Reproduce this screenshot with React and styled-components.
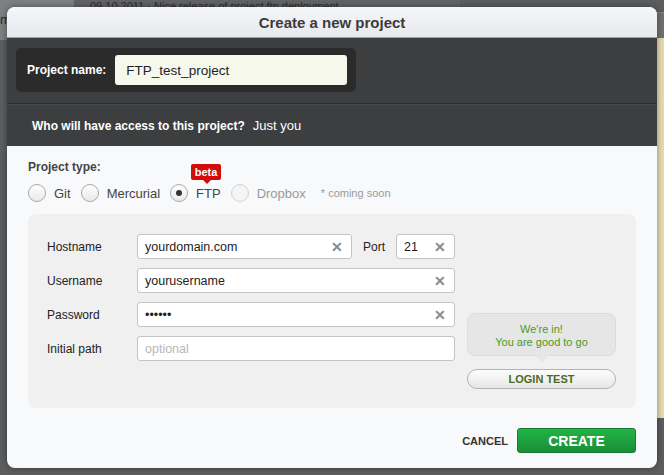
import React from 'react';
import styled, { createGlobalStyle } from 'styled-components';

// CSS
const Global = createGlobalStyle`
html, body {
  margin: 0;
  padding: 0;
  background: #5b5d5e;
  font-family: "Liberation Sans", Arial, sans-serif;
  overflow: hidden;
}
`

const Backdrop = styled.div`
position: relative;
width: 664px;
height: 475px;
background: #5b5d5e;
overflow: hidden;
`

const BackTop = styled.div`
display: flex;
height: 40px;
`

const BackLeft = styled.div`
width: 74px;
background: #7d7f80;
color: #2a2a2a;
font-size: 13px;
padding-top: 12px;
box-sizing: border-box;
`

const BackMid = styled.div`
width: 386px;
background: #616364;
color: #2e2e2e;
font-size: 11px;
padding: 0 0 0 16px;
box-sizing: border-box;
`

const BackRight = styled.div`
flex: 1;
background: #6e7071;
border-top: 1px dashed #858789;
margin-top: 12px;
`

const Beige = styled.div`
position: absolute;
right: 0;
top: 38px;
width: 7px;
height: 380px;
background: #e6dab0;
`

const Modal = styled.div`
position: absolute;
top: 7px;
left: 7px;
width: 650px;
height: 461px;
border-radius: 8px;
background: #f8f9fb;
overflow: hidden;
box-shadow: 0 0 6px rgba(0, 0, 0, 0.4);
display: flex;
flex-direction: column;
`

const Header = styled.div`
height: 31px;
flex-shrink: 0;
background: linear-gradient(#f5f6f9, #e8e9ed);
border-bottom: 1px solid #9d9ea1;
box-sizing: border-box;
display: flex;
align-items: center;
justify-content: center;
font-size: 15px;
font-weight: bold;
color: #3b3b3b;
`

const Dark = styled.div`
background: #3d3e40;
flex-shrink: 0;
`

const NameRow = styled.div`
padding: 10px 0 11px 9px;
border-bottom: 1px solid #2b2c2d;
`

const NameBox = styled.div`
display: flex;
align-items: center;
width: 340px;
height: 44px;
box-sizing: border-box;
background: #2b2b2c;
border-radius: 5px;
padding: 0 9px 0 11px;
gap: 9px;
`

const NameLabel = styled.span`
color: #fff;
font-size: 12px;
font-weight: bold;
white-space: nowrap;
`

const NameInput = styled.div`
flex: 1;
height: 30px;
background: #f6f8ec;
border-radius: 3px;
display: flex;
align-items: center;
padding-left: 11px;
font-size: 13.5px;
color: #222;
`

const AccessRow = styled.div`
height: 41px;
border-top: 1px solid #48494b;
display: flex;
align-items: center;
padding-left: 25px;
gap: 8px;
color: #fff;
`

const AccessLabel = styled.span`
font-size: 12px;
font-weight: bold;
`

const AccessValue = styled.span`
font-size: 13px;
`

const Body = styled.div`
flex: 1;
padding: 14px 21px 0 21px;
display: flex;
flex-direction: column;
`

const TypeLabel = styled.div`
font-size: 12px;
font-weight: bold;
color: #444;
`

const Radios = styled.div`
display: flex;
align-items: center;
margin-top: 9px;
height: 20px;
`

const RadioItem = styled.label`
position: relative;
display: flex;
align-items: center;
gap: 8px;
margin-right: 10px;
font-size: 13px;
color: ${p => p.disabled ? '#9a9a9a' : '#444'};
`

const Circle = styled.span`
width: 18px;
height: 18px;
box-sizing: border-box;
border-radius: 50%;
border: 1px solid ${p => p.disabled ? '#d2d2d2' : '#a9a9a9'};
background: ${p => p.disabled ? '#f4f4f4' : 'linear-gradient(#fff, #e9e9e9)'};
display: flex;
align-items: center;
justify-content: center;
&::after {
  content: '';
  display: ${p => p.checked ? 'block' : 'none'};
  width: 6px;
  height: 6px;
  border-radius: 50%;
  background: #333;
}
`

const Soon = styled.span`
font-size: 11px;
color: #999;
margin-left: 5px;
`

const Beta = styled.span`
position: absolute;
left: 21px;
top: -20px;
width: 30px;
height: 16px;
background: #d40b0b;
border-radius: 2px;
color: #fff;
font-size: 11px;
font-weight: bold;
display: flex;
align-items: center;
justify-content: center;
&::after {
  content: '';
  position: absolute;
  bottom: -4px;
  left: 12px;
  border-left: 4px solid transparent;
  border-right: 4px solid transparent;
  border-top: 4px solid #d40b0b;
}
`

const Panel = styled.div`
margin-top: 11px;
height: 194px;
box-sizing: border-box;
background: #f0f0f0;
border-radius: 8px;
padding: 20px 20px 19px 19px;
display: flex;
gap: 12px;
`

const Fields = styled.div`
display: flex;
flex-direction: column;
gap: 9px;
`

const FieldRow = styled.div`
display: flex;
align-items: center;
`

const FieldLabel = styled.span`
width: ${p => p.w || 90}px;
flex-shrink: 0;
font-size: 12px;
color: #222;
margin-left: ${p => p.ml || 0}px;
`

const Input = styled.div`
width: ${p => p.w}px;
height: 25px;
box-sizing: border-box;
background: #fff;
border: 1px solid #c4c4c4;
border-radius: 3px;
display: flex;
align-items: center;
padding: 0 8px 0 7px;
font-size: 12.5px;
color: ${p => p.placeholder ? '#b8b8b8' : '#222'};
`

const InputText = styled.span`
flex: 1;
`

const Clear = styled.span`
color: #8a8a8a;
font-size: 14px;
font-weight: bold;
line-height: 1;
`

const Side = styled.div`
align-self: flex-end;
display: flex;
flex-direction: column;
width: 149px;
gap: 13px;
`

const Bubble = styled.div`
position: relative;
height: 43px;
box-sizing: border-box;
background: #e6e6e6;
border: 1px solid #dcdcdc;
border-radius: 8px;
display: flex;
flex-direction: column;
align-items: center;
justify-content: center;
color: #4a9a1c;
font-size: 11px;
line-height: 13px;
padding-top: 2px;
&::after {
  content: '';
  position: absolute;
  bottom: -7px;
  left: 67px;
  border-left: 7px solid transparent;
  border-right: 7px solid transparent;
  border-top: 7px solid #e6e6e6;
}
`

const LoginButton = styled.div`
height: 20px;
box-sizing: border-box;
border: 1px solid #b2b2b2;
border-radius: 10px;
background: linear-gradient(#fdfdfd, #e6e6e6);
display: flex;
align-items: center;
justify-content: center;
font-size: 11px;
font-weight: bold;
color: #4f6a1c;
`

const Footer = styled.div`
display: flex;
align-items: center;
justify-content: flex-end;
margin-top: 20px;
gap: 9px;
`

const Cancel = styled.span`
font-size: 11px;
font-weight: bold;
color: #333;
`

const Create = styled.div`
width: 119px;
height: 25px;
box-sizing: border-box;
background: linear-gradient(#22b447, #1a8e37);
border: 1px solid #167c2f;
border-radius: 3px;
display: flex;
align-items: center;
justify-content: center;
color: #fff;
font-size: 14px;
font-weight: bold;
`

// Code for Component starts here
function Field({ label, value, width, placeholder, clear = true }) {
    return (
        <FieldRow>
            <FieldLabel>{label}</FieldLabel>
            <Input w={width} placeholder={placeholder ? 1 : 0}>
                <InputText>{value}</InputText>
                {clear && <Clear>✕</Clear>}
            </Input>
        </FieldRow>
    )
}

function App() {
    return (
        <Backdrop>
            <Global />
            <BackTop>
                <BackLeft>m</BackLeft>
                <BackMid>09.10.2011 · Nice release of project ftp deployment</BackMid>
                <BackRight />
            </BackTop>
            <Beige />
            <Modal>
                <Header>Create a new project</Header>
                <Dark>
                    <NameRow>
                        <NameBox>
                            <NameLabel>Project name:</NameLabel>
                            <NameInput>FTP_test_project</NameInput>
                        </NameBox>
                    </NameRow>
                    <AccessRow>
                        <AccessLabel>Who will have access to this project?</AccessLabel>
                        <AccessValue>Just you</AccessValue>
                    </AccessRow>
                </Dark>
                <Body>
                    <TypeLabel>Project type:</TypeLabel>
                    <Radios>
                        <RadioItem><Circle />Git</RadioItem>
                        <RadioItem><Circle />Mercurial</RadioItem>
                        <RadioItem><Circle checked />FTP<Beta>beta</Beta></RadioItem>
                        <RadioItem disabled><Circle disabled />Dropbox</RadioItem>
                        <Soon>* coming soon</Soon>
                    </Radios>
                    <Panel>
                        <Fields>
                            <FieldRow>
                                <FieldLabel>Hostname</FieldLabel>
                                <Input w={215}>
                                    <InputText>yourdomain.com</InputText>
                                    <Clear>✕</Clear>
                                </Input>
                                <FieldLabel w={33} ml={11}>Port</FieldLabel>
                                <Input w={59}>
                                    <InputText>21</InputText>
                                    <Clear>✕</Clear>
                                </Input>
                            </FieldRow>
                            <Field label="Username" value="yourusername" width={318} />
                            <Field label="Password" value="••••••" width={318} />
                            <Field label="Initial path" value="optional" width={318} placeholder clear={false} />
                        </Fields>
                        <Side>
                            <Bubble>
                                <span>We're in!</span>
                                <span>You are good to go</span>
                            </Bubble>
                            <LoginButton>LOGIN TEST</LoginButton>
                        </Side>
                    </Panel>
                    <Footer>
                        <Cancel>CANCEL</Cancel>
                        <Create>CREATE</Create>
                    </Footer>
                </Body>
            </Modal>
        </Backdrop>
    )
}

export default App;
